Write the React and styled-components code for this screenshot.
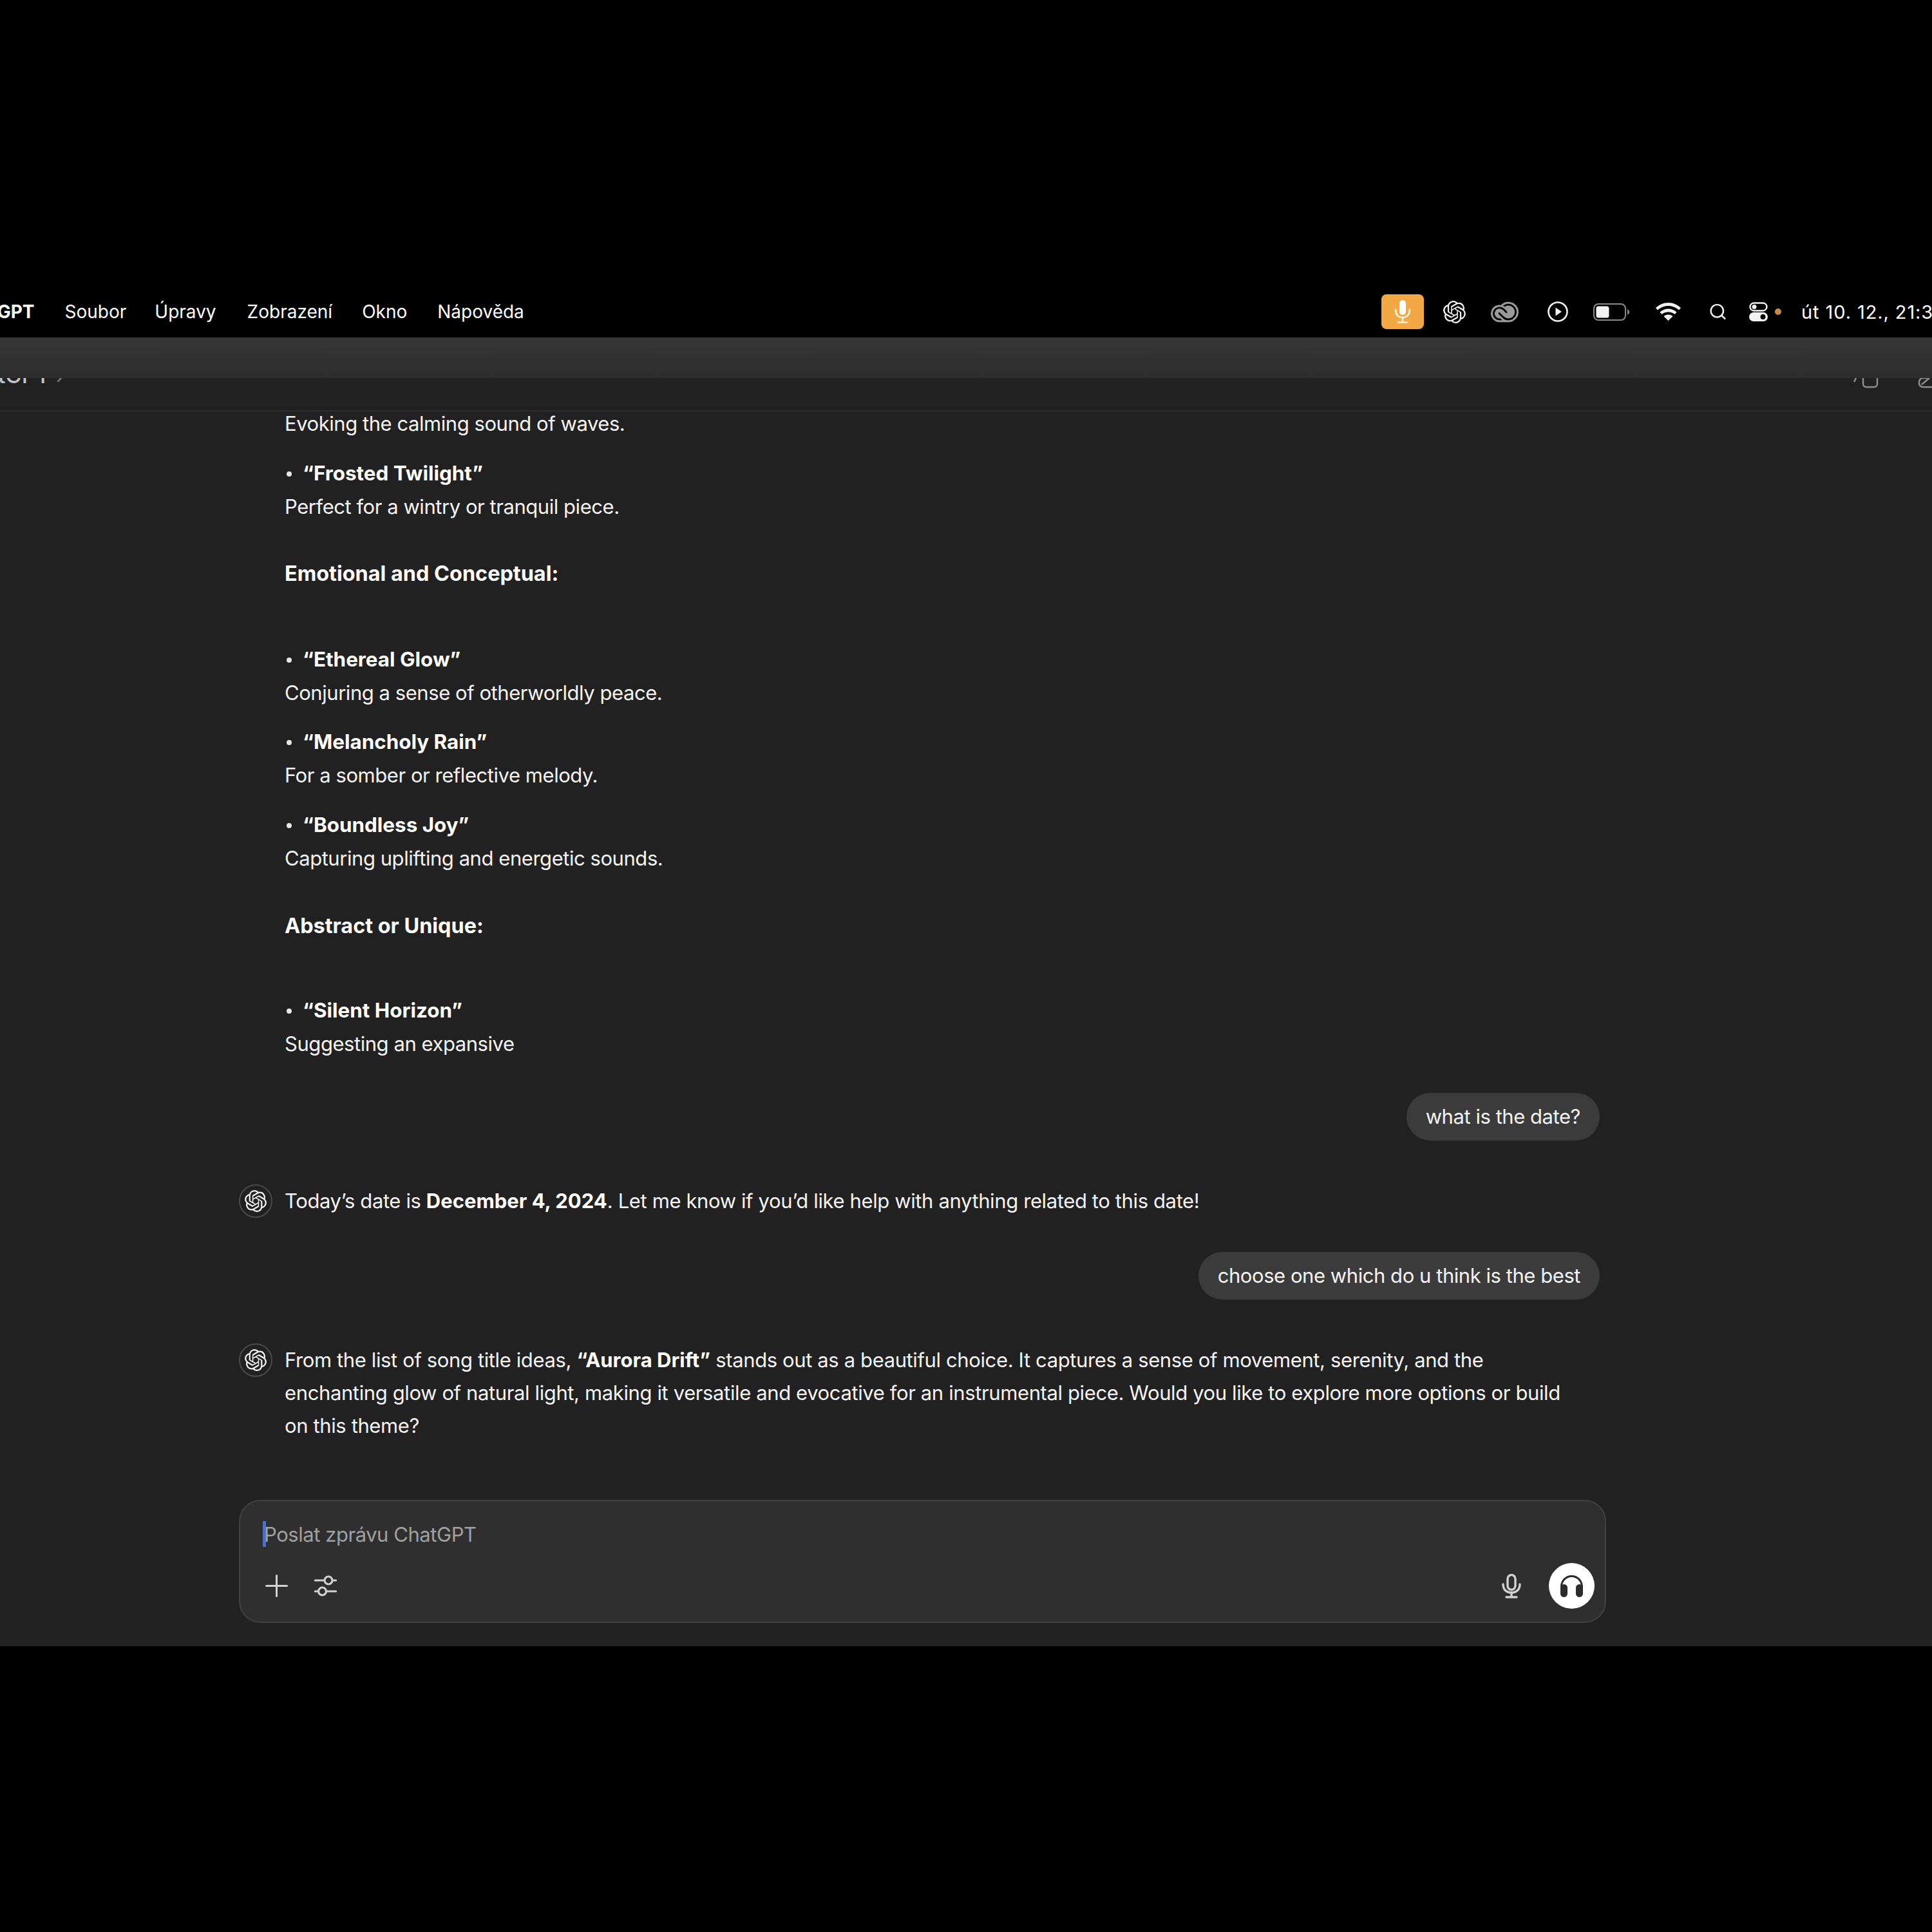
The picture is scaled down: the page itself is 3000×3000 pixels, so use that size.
import React from "react";
import styled, { createGlobalStyle } from "styled-components";
import { SiOpenai, SiAdobecreativecloud } from "react-icons/si";
import { Search } from "lucide-react";

const GlobalStyle = createGlobalStyle`
  html, body {
    margin: 0;
    padding: 0;
    background: #000;
  }
  * {
    box-sizing: border-box;
  }
`;

const Page = styled.div`
  width: 3000px;
  height: 3000px;
  background: #000;
  overflow: hidden;
  font-family: Inter, "Liberation Sans", sans-serif;
  color: #fff;
`;

const MenuBar = styled.div`
  height: 524px;
  display: flex;
  align-items: flex-end;
  justify-content: space-between;
  overflow: hidden;
`;

const MenuLeft = styled.div`
  display: flex;
  align-items: center;
  height: 80px;
  margin-left: -69px;
`;

const MenuItem = styled.span`
  font-size: 28px;
  font-weight: ${(p) => (p.$bold ? 700 : 400)};
  margin-right: ${(p) => p.$gap}px;
  white-space: nowrap;
`;

const StatusArea = styled.div`
  display: flex;
  align-items: center;
  height: 80px;
  width: 855px;
  flex: none;
`;

const MicBadge = styled.div`
  flex: none;
  width: 66px;
  height: 54px;
  border-radius: 8px;
  background: #f2a945;
  display: flex;
  align-items: center;
  justify-content: center;
  margin-right: 30px;
  color: #fff3dd;
`;

const StatusIcon = styled.div`
  display: flex;
  align-items: center;
  justify-content: center;
  flex: none;
  width: ${(p) => p.$w}px;
  margin-right: ${(p) => p.$gap}px;
  color: ${(p) => p.$color || "#f2f2f2"};
`;

const OrangeDot = styled.div`
  width: 10px;
  height: 10px;
  border-radius: 50%;
  background: #c98b43;
  margin-right: 31px;
  flex: none;
`;

const Clock = styled.span`
  font-size: 29px;
  white-space: nowrap;
  letter-spacing: 0.9px;
`;

const TabStrip = styled.div`
  height: 63px;
  background: linear-gradient(#363636, #2d2d2d);
`;

const Header = styled.div`
  height: 52px;
  background: #212121;
  border-bottom: 2px solid #2f2f2f;
  display: flex;
  align-items: flex-start;
  justify-content: space-between;
  overflow: hidden;
`;

const HeaderTitle = styled.div`
  margin-top: -21px;
  margin-left: -68px;
  font-size: 34px;
  font-weight: 500;
  line-height: 34px;
  color: #c4c4c4;
  white-space: nowrap;
`;

const HeaderChevron = styled.span`
  color: #777;
  font-weight: 400;
`;

const HeaderIcons = styled.div`
  display: flex;
  margin-top: -16px;
  margin-right: -18px;
  color: #8f8f8f;
  gap: 60px;
`;

const Main = styled.div`
  height: 1917px;
  background: #212121;
  overflow: hidden;
`;

const Thread = styled.div`
  margin-top: -7px;
  margin-left: 371px;
  width: 2113px;
  display: flex;
  flex-direction: column;
`;

const Text = styled.div`
  font-size: 31px;
  letter-spacing: -0.45px;
  line-height: 51px;
  padding-left: 71px;
  color: #f4f4f4;
`;

const Heading = styled.div`
  font-size: 32.4px;
  line-height: 51px;
  font-weight: 700;
  padding-left: 71px;
  margin-top: ${(p) => p.$top}px;
`;

const ListTitle = styled.div`
  font-size: 31.4px;
  line-height: 51px;
  font-weight: 700;
  padding-left: 71px;
  margin-top: ${(p) => p.$top}px;
  display: flex;
  align-items: center;
`;

const Bullet = styled.i`
  width: 8px;
  height: 8px;
  border-radius: 50%;
  background: #e8e8e8;
  margin: 0 17px 0 3px;
`;

const Bubble = styled.div`
  align-self: flex-end;
  height: 74px;
  line-height: 74px;
  border-radius: 37px;
  padding: 0 30px;
  background: #3b3b3b;
  font-size: 31px;
  letter-spacing: -0.45px;
  color: #f4f4f4;
  margin-top: ${(p) => p.$top}px;
`;

const Reply = styled.div`
  display: flex;
  margin-top: ${(p) => p.$top}px;
`;

const Avatar = styled.div`
  flex: none;
  width: 52px;
  height: 52px;
  border-radius: 50%;
  border: 2px solid #4a4a4a;
  color: #f2f2f2;
  display: flex;
  align-items: center;
  justify-content: center;
`;

const ReplyText = styled.div`
  flex: 1;
  font-size: 31px;
  letter-spacing: -0.38px;
  line-height: 51px;
  padding-left: 19px;
  padding-right: 44px;
  color: #f4f4f4;
  b {
    font-weight: 700;
    letter-spacing: 0;
    color: #fff;
  }
`;

const Composer = styled.div`
  margin-top: 90px;
  margin-left: 371px;
  width: 2123px;
  height: 191px;
  border-radius: 33px;
  border: 2px solid #414141;
  background: #2f2f2f;
  display: flex;
  flex-direction: column;
  padding: 31px 16px 20px 35px;
`;

const Placeholder = styled.div`
  height: 40px;
  line-height: 42px;
  font-size: 31px;
  letter-spacing: -0.45px;
  color: #a0a0a0;
  border-left: 5px solid #4a72c8;
  text-indent: -3px;
`;

const ComposerTools = styled.div`
  margin-top: auto;
  padding-left: 4px;
  display: flex;
  align-items: center;
`;

const Tool = styled.div`
  display: flex;
  color: #d2d2d2;
  margin-left: ${(p) => p.$left || "0"};
  margin-right: ${(p) => p.$right || 0}px;
`;

const VoiceButton = styled.div`
  width: 71px;
  height: 71px;
  border-radius: 50%;
  background: #fff;
  color: #2b2b2b;
  display: flex;
  align-items: center;
  justify-content: center;
`;

const MicGlyph = () => (
  <svg width="30" height="38" viewBox="0 0 30 38" fill="none" stroke="currentColor" strokeWidth="3.4" strokeLinecap="round">
    <rect x="9" y="1.5" width="12" height="23" rx="6" />
    <path d="M2 16c0 8 5 13 13 13s13-5 13-13" />
    <path d="M15 29v7M7 36h16" />
  </svg>
);

const BadgeMic = () => (
  <svg width="26" height="36" viewBox="0 0 26 36" fill="none" stroke="currentColor" strokeWidth="2.6" strokeLinecap="round">
    <rect x="8" y="0" width="10" height="23" rx="5" fill="#fff" stroke="none" />
    <path d="M2 15c0 7 4 12 11 12s11-5 11-12" />
    <path d="M13 27v7M6 34.500h14" />
  </svg>
);

const PlayCircle = () => (
  <svg width="32" height="32" viewBox="0 0 32 32" fill="none">
    <circle cx="16" cy="16" r="14.500" stroke="currentColor" strokeWidth="2.600" />
    <path d="M12.500 9.500 22 16l-9.500 6.500z" fill="currentColor" />
  </svg>
);

const Battery = () => (
  <svg width="56" height="27" viewBox="0 0 56 27" fill="none">
    <rect x="1" y="1" width="49" height="25" rx="7" stroke="#8a8a8a" strokeWidth="2" />
    <rect x="4.500" y="4.500" width="20" height="18" rx="3.500" fill="#f2f2f2" />
    <path d="M53 9c2 1 3 3 3 4.500s-1 3.500-3 4.500z" fill="#8a8a8a" />
  </svg>
);

const Wifi = () => (
  <svg width="39" height="28" viewBox="0 0 39 28" fill="currentColor">
    <path d="M19.500 0C12 0 5.500 3 0 8l3 3.500C7.500 7.500 13 5 19.500 5S31.500 7.500 36 11.500L39 8C33.500 3 27 0 19.500 0z" />
    <path d="M19.500 9.500c-5 0-9.500 2-13 5.200l3 3.400c2.700-2.400 6-3.700 10-3.700s7.300 1.300 10 3.700l3-3.400c-3.500-3.200-8-5.200-13-5.200z" />
    <path d="M19.500 18.500c-2.800 0-5.200 1-7 2.700L19.500 28l7-6.800c-1.800-1.700-4.200-2.700-7-2.700z" />
  </svg>
);

const ControlCenter = () => (
  <svg width="29" height="30" viewBox="0 0 29 30" fill="none">
    <rect x="1.500" y="1.500" width="26" height="12" rx="6" stroke="currentColor" strokeWidth="2.400" />
    <circle cx="8" cy="7.500" r="3.500" fill="currentColor" />
    <rect y="16" width="29" height="14" rx="7" fill="currentColor" />
    <circle cx="21.500" cy="23" r="4" fill="#000" />
  </svg>
);

const PlusGlyph = () => (
  <svg width="35" height="35" viewBox="0 0 35 35" fill="none" stroke="currentColor" strokeWidth="3" strokeLinecap="round">
    <path d="M17.500 1.500v32M1.500 17.500h32" />
  </svg>
);

const Sliders = () => (
  <svg width="35" height="33" viewBox="0 0 35 33" fill="none" stroke="currentColor" strokeWidth="3.200" strokeLinecap="round">
    <path d="M1.500 8h14M29 8h4.500" />
    <circle cx="22" cy="8" r="6" />
    <path d="M1.500 25h4M19 25h14.500" />
    <circle cx="12.500" cy="25" r="6" />
  </svg>
);

const Headphones = () => (
  <svg width="35" height="34" viewBox="0 0 35 34" fill="currentColor">
    <path d="M17.500 0C7.800 0 0 7.800 0 17.500V26h3V17.500C3 9.500 9.500 3 17.500 3S32 9.500 32 17.500V26h3V17.500C35 7.800 27.200 0 17.500 0z" />
    <rect x="0" y="14" width="11" height="20" rx="5.500" />
    <rect x="24" y="14" width="11" height="20" rx="5.500" />
  </svg>
);

const menuItems = [
  { label: "ChatGPT", gap: 47, bold: true },
  { label: "Soubor", gap: 44 },
  { label: "Úpravy", gap: 48 },
  { label: "Zobrazení", gap: 46 },
  { label: "Okno", gap: 47 },
  { label: "Nápověda", gap: 0 },
];

export default function App() {
  return (
    <Page>
      <GlobalStyle />
      <MenuBar>
        <MenuLeft>
          {menuItems.map((m) => (
            <MenuItem key={m.label} $bold={m.bold} $gap={m.gap}>
              {m.label}
            </MenuItem>
          ))}
        </MenuLeft>
        <StatusArea>
          <MicBadge>
            <BadgeMic />
          </MicBadge>
          <StatusIcon $w={35} $gap={39}>
            <SiOpenai size={35} />
          </StatusIcon>
          <StatusIcon $w={43} $gap={45} $color="#9a9a9a">
            <SiAdobecreativecloud size={43} />
          </StatusIcon>
          <StatusIcon $w={32} $gap={39}>
            <PlayCircle />
          </StatusIcon>
          <StatusIcon $w={56} $gap={41}>
            <Battery />
          </StatusIcon>
          <StatusIcon $w={39} $gap={43}>
            <Wifi />
          </StatusIcon>
          <StatusIcon $w={29} $gap={34}>
            <Search size={36} strokeWidth={2} />
          </StatusIcon>
          <StatusIcon $w={29} $gap={11}>
            <ControlCenter />
          </StatusIcon>
          <OrangeDot />
          <Clock>út 10. 12., 21:30</Clock>
        </StatusArea>
      </MenuBar>
      <TabStrip />
      <Header>
        <HeaderTitle>
          ChatGPT <HeaderChevron>›</HeaderChevron>
        </HeaderTitle>
        <HeaderIcons>
          <svg width="40" height="32" viewBox="0 0 40 32" fill="none" stroke="currentColor" strokeWidth="2.500">
            <rect x="15" y="4" width="22" height="26" rx="5" />
            <path d="M4 16 1 22" />
          </svg>
          <svg width="40" height="32" viewBox="0 0 40 32" fill="none" stroke="currentColor" strokeWidth="2.500">
            <path d="M16 16H8a6 6 0 0 0-6 6v2a6 6 0 0 0 6 6h24" />
            <path d="M6 26 18 16" />
          </svg>
        </HeaderIcons>
      </Header>
      <Main>
        <Thread>
          <Text>Evoking the calming sound of waves.</Text>
          <ListTitle $top={27}>
            <Bullet />“Frosted Twilight”
          </ListTitle>
          <Text>Perfect for a wintry or tranquil piece.</Text>
          <Heading $top={53}>Emotional and Conceptual:</Heading>
          <ListTitle $top={83}>
            <Bullet />“Ethereal Glow”
          </ListTitle>
          <Text>Conjuring a sense of otherworldly peace.</Text>
          <ListTitle $top={26}>
            <Bullet />“Melancholy Rain”
          </ListTitle>
          <Text>For a somber or reflective melody.</Text>
          <ListTitle $top={27}>
            <Bullet />“Boundless Joy”
          </ListTitle>
          <Text>Capturing uplifting and energetic sounds.</Text>
          <Heading $top={54}>Abstract or Unique:</Heading>
          <ListTitle $top={81}>
            <Bullet />“Silent Horizon”
          </ListTitle>
          <Text>Suggesting an expansive</Text>
          <Bubble $top={51}>what is the date?</Bubble>
          <Reply $top={68}>
            <Avatar>
              <SiOpenai size={34} />
            </Avatar>
            <ReplyText>
              Today’s date is <b>December 4, 2024</b>. Let me know if you’d like help with anything related to this date!
            </ReplyText>
          </Reply>
          <Bubble $top={53}>choose one which do u think is the best</Bubble>
          <Reply $top={68}>
            <Avatar>
              <SiOpenai size={34} />
            </Avatar>
            <ReplyText>
              From the list of song title ideas, <b>“Aurora Drift”</b> stands out as a beautiful choice. It captures a sense of movement, serenity, and the
              enchanting glow of natural light, making it versatile and evocative for an instrumental piece. Would you like to explore more options or build
              on this theme?
            </ReplyText>
          </Reply>
        </Thread>
        <Composer>
          <Placeholder>Poslat zprávu ChatGPT</Placeholder>
          <ComposerTools>
            <Tool $right={41}>
              <PlusGlyph />
            </Tool>
            <Tool>
              <Sliders />
            </Tool>
            <Tool $left="auto" $right={43}>
              <MicGlyph />
            </Tool>
            <VoiceButton>
              <Headphones />
            </VoiceButton>
          </ComposerTools>
        </Composer>
      </Main>
    </Page>
  );
}
